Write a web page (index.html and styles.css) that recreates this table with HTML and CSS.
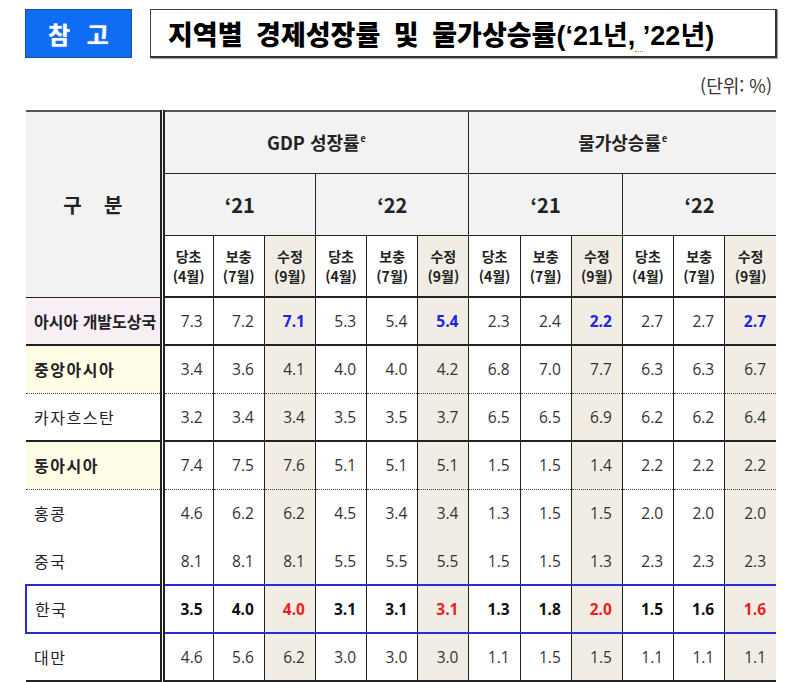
FILE: index.html
```html
<!DOCTYPE html>
<html lang="ko">
<head>
<meta charset="utf-8">
<link rel="stylesheet" href="styles.css">
</head>
<body>
<div class="page">
  <div class="head">
    <div class="badge">참 고</div>
    <div class="title"><span class="title-text">지역별 경제성장률 및 물가상승률<span class="title-year">(‘21년,<span class="spell"> </span>’22년)</span></span></div>
  </div>
  <div class="unit">(단위: %)</div>
  <table class="tbl">
    <colgroup><col class="c-label"><col span="12"></colgroup>
    <thead>
      <tr class="h1">
        <th rowspan="3" class="label-head">구&nbsp;&nbsp;&nbsp;&nbsp;분</th>
        <th colspan="6">GDP 성장률<sup>e</sup></th>
        <th colspan="6">물가상승률<sup>e</sup></th>
      </tr>
      <tr class="h2">
        <th colspan="3" class="yr">‘21</th>
        <th colspan="3" class="yr">‘22</th>
        <th colspan="3" class="yr">‘21</th>
        <th colspan="3" class="yr">‘22</th>
      </tr>
      <tr class="h3">
        <th>당초<br>(4월)</th><th>보충<br>(7월)</th><th class="rev">수정<br>(9월)</th>
        <th>당초<br>(4월)</th><th>보충<br>(7월)</th><th class="rev">수정<br>(9월)</th>
        <th>당초<br>(4월)</th><th>보충<br>(7월)</th><th class="rev">수정<br>(9월)</th>
        <th>당초<br>(4월)</th><th>보충<br>(7월)</th><th class="rev">수정<br>(9월)</th>
      </tr>
    </thead>
    <tbody>
      <tr class="r-dev solid-below">
        <td class="label pink bold">아시아 개발도상국</td>
        <td>7.3</td><td>7.2</td><td class="rev blue">7.1</td>
        <td>5.3</td><td>5.4</td><td class="rev blue">5.4</td>
        <td>2.3</td><td>2.4</td><td class="rev blue">2.2</td>
        <td>2.7</td><td>2.7</td><td class="rev blue">2.7</td>
      </tr>
      <tr class="dotted-below">
        <td class="label yellow bold sp">중앙아시아</td>
        <td>3.4</td><td>3.6</td><td class="rev">4.1</td>
        <td>4.0</td><td>4.0</td><td class="rev">4.2</td>
        <td>6.8</td><td>7.0</td><td class="rev">7.7</td>
        <td>6.3</td><td>6.3</td><td class="rev">6.7</td>
      </tr>
      <tr class="solid-below">
        <td class="label sp">카자흐스탄</td>
        <td>3.2</td><td>3.4</td><td class="rev">3.4</td>
        <td>3.5</td><td>3.5</td><td class="rev">3.7</td>
        <td>6.5</td><td>6.5</td><td class="rev">6.9</td>
        <td>6.2</td><td>6.2</td><td class="rev">6.4</td>
      </tr>
      <tr class="dotted-below">
        <td class="label yellow bold sp">동아시아</td>
        <td>7.4</td><td>7.5</td><td class="rev">7.6</td>
        <td>5.1</td><td>5.1</td><td class="rev">5.1</td>
        <td>1.5</td><td>1.5</td><td class="rev">1.4</td>
        <td>2.2</td><td>2.2</td><td class="rev">2.2</td>
      </tr>
      <tr>
        <td class="label sp">홍콩</td>
        <td>4.6</td><td>6.2</td><td class="rev">6.2</td>
        <td>4.5</td><td>3.4</td><td class="rev">3.4</td>
        <td>1.3</td><td>1.5</td><td class="rev">1.5</td>
        <td>2.0</td><td>2.0</td><td class="rev">2.0</td>
      </tr>
      <tr>
        <td class="label sp">중국</td>
        <td>8.1</td><td>8.1</td><td class="rev">8.1</td>
        <td>5.5</td><td>5.5</td><td class="rev">5.5</td>
        <td>1.5</td><td>1.5</td><td class="rev">1.3</td>
        <td>2.3</td><td>2.3</td><td class="rev">2.3</td>
      </tr>
      <tr class="korea">
        <td class="label sp">한국</td>
        <td class="b">3.5</td><td class="b">4.0</td><td class="rev red">4.0</td>
        <td class="b">3.1</td><td class="b">3.1</td><td class="rev red">3.1</td>
        <td class="b">1.3</td><td class="b">1.8</td><td class="rev red">2.0</td>
        <td class="b">1.5</td><td class="b">1.6</td><td class="rev red">1.6</td>
      </tr>
      <tr class="last">
        <td class="label sp">대만</td>
        <td>4.6</td><td>5.6</td><td class="rev">6.2</td>
        <td>3.0</td><td>3.0</td><td class="rev">3.0</td>
        <td>1.1</td><td>1.5</td><td class="rev">1.5</td>
        <td>1.1</td><td>1.1</td><td class="rev">1.1</td>
      </tr>
    </tbody>
  </table>
</div>
</body>
</html>
```

FILE: styles.css
```css
* { box-sizing: border-box; }
body {
  margin: 0;
  background: #fff;
  font-family: "Noto Sans CJK KR", "Noto Sans", sans-serif;
  color: #222;
}
.page {
  padding: 9px 21px 0 25px;
}
.head {
  display: flex;
  gap: 18px;
  height: 49px;
}
.badge {
  width: 107px;
  background: #0f6cf4;
  border: 1px solid #1b4f9c;
  color: #fff;
  font-weight: 700;
  font-size: 24px;
  word-spacing: 10px;
  display: flex;
  align-items: center;
  justify-content: center;
  text-shadow: 0 0 1px #cfe0ff;
}
.title {
  flex: 1;
  border: 1px solid #444;
  border-right: 2px solid #333;
  border-bottom: 2px solid #333;
  box-shadow: 1px 1px 1px #aaa;
  display: flex;
  align-items: center;
  padding-left: 17px;
  overflow: hidden;
}
.title-text {
  font-size: 27px;
  font-weight: 900;
  color: #000;
  white-space: nowrap;
  word-spacing: 6px;
}
.title-year {
  font-family: "Liberation Sans", "Noto Sans CJK KR", sans-serif;
  font-weight: 700;
  font-size: 27px;
  word-spacing: 0;
}
.spell {
  border-bottom: 1px dotted #e08a2a;
}
.unit {
  margin-top: 16px;
  height: 22px;
  line-height: 22px;
  font-size: 18px;
  text-align: right;
  padding-right: 5px;
  color: #333;
}
.tbl {
  margin-top: 14px;
  width: 751px;
  border-collapse: collapse;
  table-layout: fixed;
  font-family: "Open Sans", "Noto Sans CJK KR", sans-serif;
}
.c-label { width: 136px; }
.tbl th, .tbl td {
  border-left: 1px solid #222;
  border-right: 1px solid #222;
  padding: 0;
}
.tbl th {
  background: #f2f2f2;
  font-family: "Noto Sans CJK KR", sans-serif;
  font-weight: 700;
  color: #222;
}
.tbl thead tr.h1 th {
  border-top: 2px solid #555;
}
.h1 th {
  height: 62px;
  font-size: 18px;
  border-bottom: 1px solid #222;
}
.h1 th sup {
  font-size: 9px;
  vertical-align: 8px;
  margin-left: 1px;
}
.label-head {
  font-size: 20px !important;
  border-left: none !important;
  border-right: 5px double #222 !important;
  border-bottom: 2px solid #222;
}
.h2 th {
  height: 62px;
  font-size: 20px;
  border-bottom: 1px solid #222;
}
.h3 th {
  height: 62px;
  font-size: 14px;
  line-height: 20px;
  background: #fff;
  border-bottom: 2px solid #222;
}
.h3 th.rev { background: #f1ede4; }

.tbl td {
  height: 48px;
  font-size: 15.5px;
  text-align: right;
  padding-right: 10px;
  color: #333;
}
.tbl td.rev { background: #f1ede4; }
.tbl td.label {
  text-align: left;
  padding-left: 8px;
  padding-right: 0;
  border-left: none;
  border-right: 5px double #222;
  font-family: "Noto Sans CJK KR", sans-serif;
  font-size: 16px;
  color: #222;
}
.tbl td.label.sp { letter-spacing: 1.5px; }
.tbl td.bold { font-weight: 700; }
.tbl td.pink { background: #f8eef5; }
.tbl td.yellow { background: #fffde6; }
.tbl tr td:last-child, .tbl tr th:last-child { border-right: none; }
.tbl td.blue { color: #2323e0; font-weight: 700; }
.tbl td.red { color: #f01d1d; font-weight: 700; }
.tbl td.b { font-weight: 700; color: #111; }
.solid-below td { border-bottom: 2px solid #222; }
.dotted-below td { border-bottom: 1px dotted #444; }
.korea td {
  border-top: 2px solid #2a2ad6;
  border-bottom: 2px solid #2a2ad6;
}
.korea td:first-child { border-left: 2px solid #2a2ad6; }
.korea td:last-child { border-right: 2px solid #2a2ad6; }
.last td { border-bottom: 2px solid #222; }
```
